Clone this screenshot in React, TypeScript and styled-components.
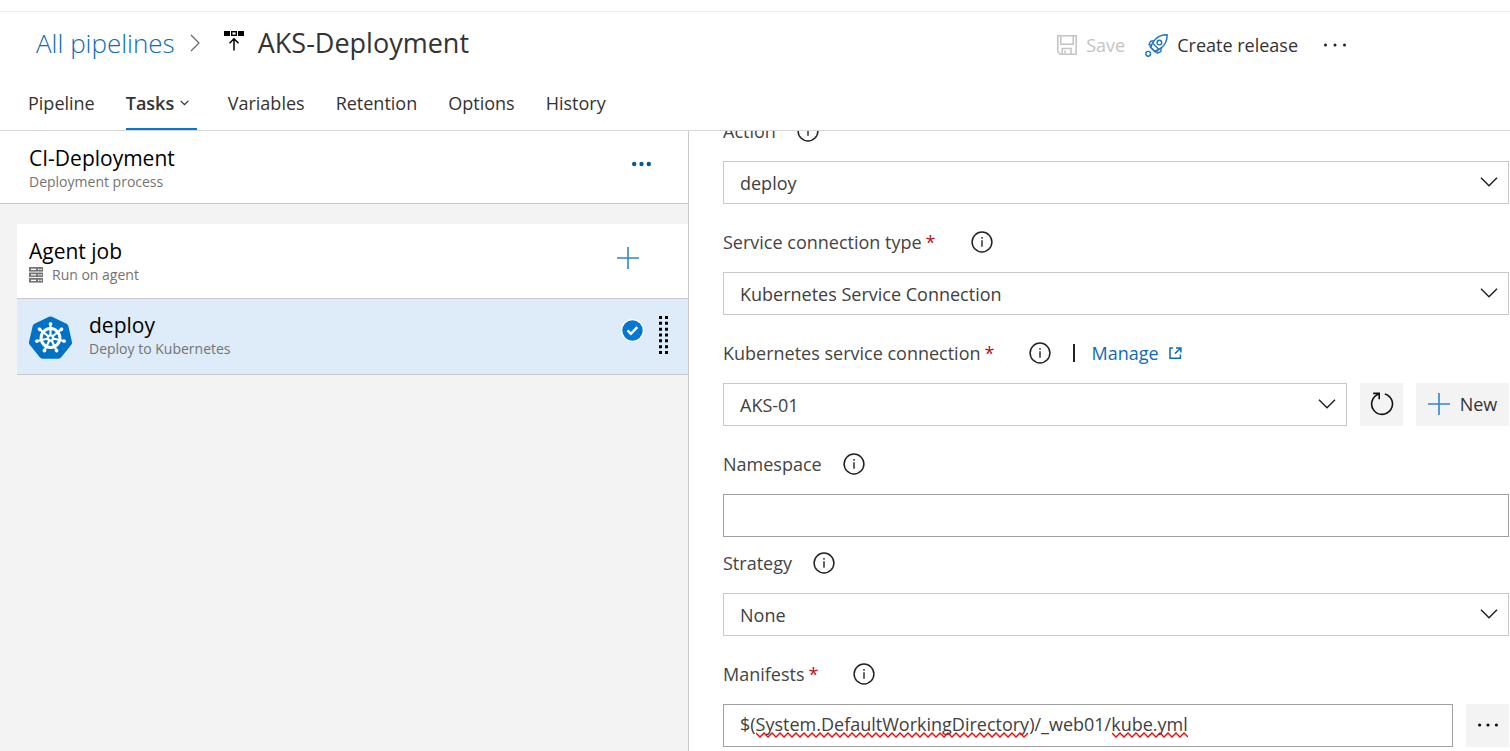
import React from 'react';
import styled, { createGlobalStyle, css } from 'styled-components';

const GlobalStyle = createGlobalStyle`
  *, *::before, *::after { box-sizing: border-box; }
  body {
    margin: 0;
    background: #fff;
    color: #333;
    font-family: "Open Sans", "Noto Sans", sans-serif;
    font-size: 18px;
  }
  button, input, select { font: inherit; color: inherit; }
  svg { display: block; flex: none; }
`;

const Page = styled.div`
  display: flex;
  flex-direction: column;
  min-height: 100vh;
`;

const TopStrip = styled.div`
  height: 12px;
  border-bottom: 1px solid #eaeaea;
`;

const Header = styled.header`
  border-bottom: 1px solid #d6d6d6;
`;

const TitleRow = styled.div`
  display: flex;
  align-items: center;
  justify-content: space-between;
  height: 64px;
  padding: 0 164px 0 36px;
`;

const Breadcrumb = styled.nav`
  display: flex;
  align-items: center;
  padding-bottom: 2px;
`;

const CrumbLink = styled.a`
  color: #0f6ab4;
  font-size: 26px;
  font-weight: 300;
  line-height: 36px;
  text-decoration: none;
`;

const CrumbArrow = styled.svg`
  margin: 0 24px 0 15px;
`;

const PageTitle = styled.h1`
  margin: 0 0 0 14px;
  font-size: 27px;
  font-weight: 400;
  line-height: 36px;
`;

const Actions = styled.div`
  display: flex;
  align-items: center;
  gap: 20px;
  padding-top: 2px;
`;

const PlainButton = styled.button`
  display: flex;
  align-items: center;
  padding: 0;
  border: 0;
  background: none;
  cursor: pointer;
`;

const ActionButton = styled(PlainButton)`
  gap: 9px;
  line-height: 24px;
  &:disabled { color: #c4c4c4; cursor: default; }
`;

const MoreButton = styled(PlainButton)`
  margin-left: 6px;
`;

const Tabs = styled.nav`
  display: flex;
  gap: 31px;
  padding: 0 28px;
`;

const Tab = styled.a<{ $active?: boolean }>`
  display: flex;
  align-items: center;
  justify-content: space-between;
  height: 54px;
  padding-top: 2px;
  border-bottom: 2px solid transparent;
  color: #333;
  text-decoration: none;
  ${({ $active }) => $active && css`
    width: 71px;
    padding-right: 8px;
    border-color: #0078d4;
    font-weight: 600;
  `}
`;

const Body = styled.div`
  display: grid;
  flex: 1;
  grid-template-columns: minmax(0, 689fr) minmax(0, 821fr);
`;

const Sidebar = styled.aside`
  border-right: 1px solid #c8c8c8;
  background: #f3f3f3;
`;

const ProcessHeader = styled.div`
  display: flex;
  align-items: flex-start;
  justify-content: space-between;
  height: 73px;
  padding: 13px 37px 0 29px;
  border-bottom: 1px solid #c8c8c8;
  background: #fff;
`;

const ProcessMore = styled(PlainButton)`
  height: 40px;
`;

const JobList = styled.div`
  margin: 20px 0 0 17px;
`;

const JobRow = styled.div<{ $selected?: boolean }>`
  display: flex;
  align-items: flex-start;
  min-height: ${({ $selected }) => ($selected ? 76 : 75)}px;
  padding: ${({ $selected }) => ($selected ? '12px 20px 12px' : '13px 49px 13px')} 12px;
  border-bottom: 1px solid #c8c8c8;
  background: ${({ $selected }) => ($selected ? '#deebf8' : '#fff')};
`;

const TaskLogo = styled.svg`
  margin: 5px 17px 0 0;
`;

const RowText = styled.div`
  flex: 1;
  min-width: 0;
`;

const RowTitle = styled.h2`
  margin: 0;
  color: #000;
  font-size: 21px;
  font-weight: 400;
  line-height: 28px;
`;

const RowSub = styled.p`
  display: flex;
  align-items: center;
  gap: 9px;
  margin: 0;
  color: #737373;
  font-size: 14px;
  line-height: 20px;
`;

const AddTask = styled(PlainButton)`
  height: 42px;
`;

const RowStatus = styled.div`
  display: flex;
  align-items: flex-start;
  gap: 15px;
  padding-top: 5px;
`;

const Badge = styled.svg`
  margin-top: 3px;
`;

const Form = styled.form`
  overflow: hidden;
  padding: 0 1px 0 34px;
`;

/* The form is scrolled slightly, so its first label sits under the header. */
const Scrolled = styled.div`
  margin-top: -12px;
`;

const Field = styled.div<{ $tight?: boolean }>`
  margin-bottom: ${({ $tight }) => ($tight ? 14 : 26)}px;
`;

const LabelRow = styled.div`
  display: flex;
  align-items: center;
  height: 24px;
  margin-bottom: 18px;
  color: #444;
`;

const Label = styled.label`
  line-height: 24px;
  white-space: nowrap;
`;

const Required = styled.span`
  margin-left: 4px;
  color: #b80f1a;
`;

const InfoButton = styled(PlainButton)<{ $wide?: boolean }>`
  margin-left: ${({ $wide }) => ($wide ? 35 : 21)}px;
`;

const Divider = styled.span`
  width: 2px;
  height: 18px;
  margin: 0 16px 0 22px;
  background: #222;
`;

const ManageLink = styled.a`
  display: flex;
  align-items: center;
  gap: 10px;
  color: #0f6ab4;
  line-height: 24px;
  text-decoration: none;
`;

const ControlRow = styled.div`
  display: flex;
  gap: 13px;
`;

const ControlBox = styled.div`
  position: relative;
  flex: 1;
  min-width: 0;
`;

const boxed = css`
  display: block;
  width: 100%;
  height: 43px;
  padding: 0 16px;
  border-radius: 0;
  background: #fff;
  color: #404040;
  outline: 0;
`;

const Select = styled.select`
  ${boxed}
  border: 1px solid #c8c8c8;
  appearance: none;
`;

const TextInput = styled.input`
  ${boxed}
  padding-bottom: 3px;
  border: 1px solid #a0a0a0;
`;

const SelectArrow = styled.svg`
  position: absolute;
  top: 16px;
  right: 11px;
  pointer-events: none;
`;

const SpellingMarks = styled.div`
  position: absolute;
  left: 33px;
  bottom: 9px;
  display: flex;
  gap: 83px;
  pointer-events: none;
`;

const GreyButton = styled.button<{ $wide?: boolean }>`
  display: flex;
  flex: none;
  align-items: center;
  justify-content: center;
  gap: 10px;
  width: ${({ $wide }) => ($wide ? 93 : 43)}px;
  height: 43px;
  padding: 0 0 2px;
  border: 0;
  background: #f3f3f3;
  color: #333;
  cursor: pointer;
`;

function Dots({ size, radius, color }: { size: number; radius: number; color: string }) {
  return (
    <svg width={size} height="6" viewBox={`0 0 ${size} 6`} fill={color} aria-hidden="true">
      <circle cx={radius} cy="3" r={radius} />
      <circle cx={size / 2} cy="3" r={radius} />
      <circle cx={size - radius} cy="3" r={radius} />
    </svg>
  );
}

function Plus() {
  return (
    <svg width="22" height="22" viewBox="0 0 22 22" aria-hidden="true">
      <path d="M11 0v22M0 11h22" stroke="#2f86d0" strokeWidth="1.6" />
    </svg>
  );
}

function ReleaseIcon() {
  return (
    <svg width="20" height="24" viewBox="0 0 20 24" fill="none" aria-hidden="true">
      <path d="M0 0h6v5H0zM14 0h6v5h-6z" fill="#000" />
      <rect x="7.7" y=".7" width="4.6" height="3.6" stroke="#000" strokeWidth="1.4" />
      <path d="M10 19.5V8M5.5 12.2 10 7.7l4.5 4.5" stroke="#000" strokeWidth="1.5" />
    </svg>
  );
}

function SaveIcon() {
  return (
    <svg width="20" height="20" viewBox="0 0 20 20" fill="none" stroke="#c4c4c4" strokeWidth="1.5" aria-hidden="true">
      <path d="M.8.8h18.4v18.4H3.2L.8 16.8z" />
      <path d="M3.8.8v8.4h12.4V.8M5.2 19v-5.6h8.8V19M8 15.4v3" />
    </svg>
  );
}

function RocketIcon() {
  return (
    <svg width="23" height="23" viewBox="0 0 23 23" fill="none" stroke="#1b74c5" strokeWidth="1.4" strokeLinejoin="round" aria-hidden="true">
      <path d="M22.2.8C16.5.8 12.5 2.6 9.4 6.4 7.6 8.6 6.4 11 5.8 13.4l3.8 3.8c2.4-.6 4.8-1.8 7-3.6 3.8-3.1 5.6-7.1 5.6-12.8z" />
      <circle cx="14.4" cy="8.6" r="2.3" />
      <path d="M9.2 6.8 5.6 7.2 4 10.8l2.6.6M16.2 13.8l-.4 3.8-3.6 1.6-.6-2.6M7.2 8.8l7 7M4.6 12.2l6.2 6.2" />
      <circle cx="3.2" cy="19.8" r="2.4" />
    </svg>
  );
}

function InfoIcon() {
  return (
    <svg width="22" height="22" viewBox="0 0 22 22" fill="none" stroke="#222" aria-hidden="true">
      <circle cx="11" cy="11" r="9.9" strokeWidth="1.5" />
      <path d="M11 9.3v6.4M11 6v1.7" strokeWidth="1.4" />
    </svg>
  );
}

function ServerIcon() {
  return (
    <svg width="14" height="16" viewBox="0 0 14 16" aria-hidden="true">
      {[0, 5.5, 11].map((y) => (
        <g key={y}>
          <rect y={y} width="14" height="4.6" fill="#757575" />
          <path d={`M2 ${y + 2.3}h5M9 ${y + 2.3}h1.4M11.4 ${y + 2.3}h1.4`} stroke="#fff" strokeWidth="1.3" />
        </g>
      ))}
    </svg>
  );
}

const turn = (i: number) => (i * 2 * Math.PI) / 7;
const heptagon = Array.from({ length: 7 }, (_, i) =>
  `${21.5 + 18.5 * Math.sin(turn(i))},${22.5 - 18.5 * Math.cos(turn(i))}`).join(' ');

function KubernetesLogo() {
  return (
    <TaskLogo width="43" height="43" viewBox="0 0 43 43" role="img" aria-label="Kubernetes">
      <polygon points={heptagon} fill="#0072c6" stroke="#0072c6" strokeWidth="7" strokeLinejoin="round" />
      <circle cx="21.5" cy="22" r="9.4" fill="none" stroke="#fff" strokeWidth="3" />
      {Array.from({ length: 7 }, (_, i) => (
        <g key={i} transform={`rotate(${(i * 360) / 7} 21.5 22)`}>
          <path d="M21.5 19.6V6.2" stroke="#fff" strokeWidth="2.2" />
          <path d="M19.8 8.2h3.4" stroke="#fff" strokeWidth="2.4" />
        </g>
      ))}
      <circle cx="21.5" cy="22" r="3.8" fill="#fff" />
      <circle cx="21.5" cy="22" r="1.4" fill="#0072c6" />
    </TaskLogo>
  );
}

function CheckBadge() {
  return (
    <Badge width="23" height="23" viewBox="0 0 23 23" role="img" aria-label="Enabled">
      <circle cx="11.5" cy="11.5" r="11.5" fill="#fff" />
      <circle cx="11.5" cy="11.5" r="10.2" fill="#0078d4" />
      <path d="m6.6 11.4 3.3 3.4 6.4-6.6" fill="none" stroke="#fff" strokeWidth="2.4" />
    </Badge>
  );
}

function Grip() {
  return (
    <svg width="9" height="38" viewBox="0 0 9 38" aria-hidden="true">
      <path d="M1.5 0v38M7.5 0v38" stroke="#000" strokeWidth="3" strokeDasharray="3 2.83" />
    </svg>
  );
}

function Arrow() {
  return (
    <SelectArrow width="18" height="10" viewBox="0 0 18 10" aria-hidden="true">
      <path d="m1 .8 8 8 8-8" fill="none" stroke="#222" strokeWidth="1.5" />
    </SelectArrow>
  );
}

function RefreshIcon() {
  return (
    <svg width="24" height="24" viewBox="0 0 24 24" fill="none" stroke="#111" strokeWidth="1.6" aria-hidden="true">
      <path d="M14.8 1.9A10.4 10.4 0 1 1 9 2" />
      <path d="M3.2 1.4h6v5.8" />
    </svg>
  );
}

function ExternalIcon() {
  return (
    <svg width="13" height="12" viewBox="0 0 13 12" fill="none" stroke="#0f6ab4" strokeWidth="1.5" aria-hidden="true">
      <path d="M4 .9H1v10.3h10.4V7.4" />
      <path d="M7 .9h4.9v4.6M11.7 1 6 6.6" />
    </svg>
  );
}

function Squiggle({ width }: { width: number }) {
  let d = 'M0 1';
  for (let x = 4, down = true; x <= width; x += 4, down = !down) d += `L${x} ${down ? 5 : 1}`;
  return (
    <svg width={width} height="6" viewBox={`0 0 ${width} 6`} aria-hidden="true">
      <path d={d} fill="none" stroke="#f00" strokeWidth="1.3" />
    </svg>
  );
}

interface FieldLabelProps {
  id: string;
  text: string;
  required?: boolean;
  children?: React.ReactNode;
}

function FieldLabel({ id, text, required, children }: FieldLabelProps) {
  return (
    <LabelRow>
      <Label htmlFor={id}>
        {text}
        {required && <Required>*</Required>}
      </Label>
      <InfoButton type="button" $wide={required} aria-label={`About ${text}`}>
        <InfoIcon />
      </InfoButton>
      {children}
    </LabelRow>
  );
}

function Picker({ id, value }: { id: string; value: string }) {
  return (
    <ControlBox>
      <Select id={id} defaultValue={value}>
        <option>{value}</option>
      </Select>
      <Arrow />
    </ControlBox>
  );
}

export default function App() {
  return (
    <Page>
      <GlobalStyle />
      <TopStrip />
      <Header>
        <TitleRow>
          <Breadcrumb aria-label="Breadcrumb">
            <CrumbLink href="#pipelines">All pipelines</CrumbLink>
            <CrumbArrow width="10" height="18" viewBox="0 0 10 18" aria-hidden="true">
              <path d="m1 1 8 8-8 8" fill="none" stroke="#666" strokeWidth="1.2" />
            </CrumbArrow>
            <ReleaseIcon />
            <PageTitle>AKS-Deployment</PageTitle>
          </Breadcrumb>
          <Actions>
            <ActionButton type="button" disabled>
              <SaveIcon />
              Save
            </ActionButton>
            <ActionButton type="button">
              <RocketIcon />
              Create release
            </ActionButton>
            <MoreButton type="button" aria-label="More actions">
              <Dots size={22} radius={1.5} color="#222" />
            </MoreButton>
          </Actions>
        </TitleRow>
        <Tabs>
          <Tab href="#pipeline">Pipeline</Tab>
          <Tab href="#tasks" $active aria-current="page">
            Tasks
            <svg width="9" height="6" viewBox="0 0 9 6" aria-hidden="true">
              <path d="m.7.9 3.8 3.8L8.3.9" fill="none" stroke="#333" strokeWidth="1.3" />
            </svg>
          </Tab>
          <Tab href="#variables">Variables</Tab>
          <Tab href="#retention">Retention</Tab>
          <Tab href="#options">Options</Tab>
          <Tab href="#history">History</Tab>
        </Tabs>
      </Header>
      <Body>
        <Sidebar>
          <ProcessHeader>
            <RowText>
              <RowTitle>CI-Deployment</RowTitle>
              <RowSub>Deployment process</RowSub>
            </RowText>
            <ProcessMore type="button" aria-label="Process actions">
              <Dots size={19} radius={2.2} color="#005a9e" />
            </ProcessMore>
          </ProcessHeader>
          <JobList>
            <JobRow>
              <RowText>
                <RowTitle>Agent job</RowTitle>
                <RowSub>
                  <ServerIcon />
                  Run on agent
                </RowSub>
              </RowText>
              <AddTask type="button" aria-label="Add a task">
                <Plus />
              </AddTask>
            </JobRow>
            <JobRow $selected>
              <KubernetesLogo />
              <RowText>
                <RowTitle>deploy</RowTitle>
                <RowSub>Deploy to Kubernetes</RowSub>
              </RowText>
              <RowStatus>
                <CheckBadge />
                <Grip />
              </RowStatus>
            </JobRow>
          </JobList>
        </Sidebar>
        <Form>
          <Scrolled>
            <Field>
              <FieldLabel id="action" text="Action" />
              <Picker id="action" value="deploy" />
            </Field>
            <Field>
              <FieldLabel id="connection-type" text="Service connection type" required />
              <Picker id="connection-type" value="Kubernetes Service Connection" />
            </Field>
            <Field>
              <FieldLabel id="connection" text="Kubernetes service connection" required>
                <Divider />
                <ManageLink href="#manage">
                  Manage
                  <ExternalIcon />
                </ManageLink>
              </FieldLabel>
              <ControlRow>
                <Picker id="connection" value="AKS-01" />
                <GreyButton type="button" aria-label="Refresh">
                  <RefreshIcon />
                </GreyButton>
                <GreyButton type="button" $wide>
                  <Plus />
                  New
                </GreyButton>
              </ControlRow>
            </Field>
            <Field $tight>
              <FieldLabel id="namespace" text="Namespace" />
              <TextInput id="namespace" type="text" />
            </Field>
            <Field>
              <FieldLabel id="strategy" text="Strategy" />
              <Picker id="strategy" value="None" />
            </Field>
            <Field $tight>
              <FieldLabel id="manifests" text="Manifests" required />
              <ControlRow>
                <ControlBox>
                  <TextInput
                    id="manifests"
                    type="text"
                    defaultValue="$(System.DefaultWorkingDirectory)/_web01/kube.yml"
                  />
                  <SpellingMarks>
                    <Squiggle width={273} />
                    <Squiggle width={76} />
                  </SpellingMarks>
                </ControlBox>
                <GreyButton type="button" aria-label="Browse manifests">
                  <Dots size={20} radius={1.6} color="#111" />
                </GreyButton>
              </ControlRow>
            </Field>
          </Scrolled>
        </Form>
      </Body>
    </Page>
  );
}
